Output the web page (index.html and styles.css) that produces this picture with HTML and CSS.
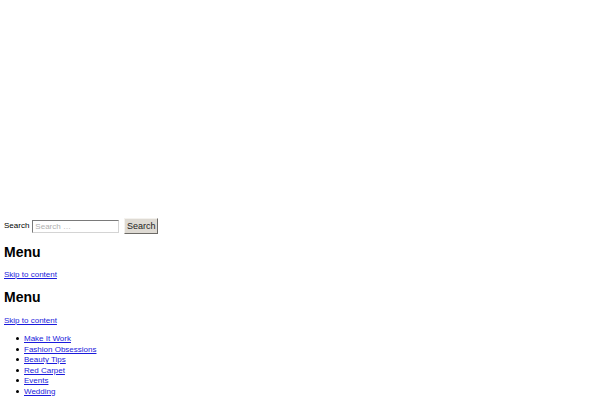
FILE: index.html
```html
<!DOCTYPE html>
<html>
<head>
<meta charset="utf-8">
<link rel="stylesheet" href="styles.css">
</head>
<body>
<div class="hero"></div>
<form class="search">
  <label class="search-label">Search</label>
  <input class="search-input" type="text" placeholder="Search …">
  <button class="search-btn" type="button">Search</button>
</form>
<h2 class="menu-title">Menu</h2>
<a class="skip" href="#">Skip to content</a>
<h2 class="menu-title second">Menu</h2>
<a class="skip" href="#">Skip to content</a>
<ul class="nav">
  <li><a href="#">Make It Work</a></li>
  <li><a href="#">Fashion Obsessions</a></li>
  <li><a href="#">Beauty Tips</a></li>
  <li><a href="#">Red Carpet</a></li>
  <li><a href="#">Events</a></li>
  <li><a href="#">Wedding</a></li>
</ul>
</body>
</html>
```
FILE: styles.css
```css
html, body {
  margin: 0;
  padding: 0;
  background: #fff;
}
body {
  padding: 0 4px;
  font-family: "Liberation Sans", Arial, sans-serif;
  font-size: 8px;
  line-height: 10.5px;
  color: #000;
}
a {
  color: #1a1adb;
}
.hero {
  height: 218px;
}
.search {
  display: flex;
  align-items: center;
  height: 16px;
  margin: 0 0 10px;
}
.search-label {
  margin-right: 3px;
}
.search-input {
  box-sizing: border-box;
  width: 87px;
  height: 13px;
  margin: 0 5px 0 0;
  padding: 0 2px;
  font: 8px "Liberation Sans", Arial, sans-serif;
  border: 1px solid;
  border-color: #7a7a7a #d4d4d4 #d4d4d4 #7a7a7a;
  background: #fff;
}
.search-input::placeholder {
  color: #b0b0b0;
}
.search-btn {
  box-sizing: border-box;
  height: 16px;
  width: 34px;
  padding: 0;
  font: 9px "Liberation Sans", Arial, sans-serif;
  color: #222;
  background: #dedad3;
  border: 1px solid;
  border-color: #f4f2ee #6c6a66 #6c6a66 #f4f2ee;
}
.menu-title {
  margin: 8px 0 10px;
  font-size: 14px;
  line-height: 16px;
  font-weight: bold;
}
.menu-title.second {
  margin-bottom: 11px;
}
.skip {
  display: block;
  width: max-content;
}
.nav {
  margin: 8px 0 0;
  padding-left: 20px;
  list-style: none;
}
.nav li::before {
  content: "";
  display: inline-block;
  width: 3px;
  height: 3px;
  border-radius: 50%;
  background: #000;
  margin: 0 5px 0 -8px;
  vertical-align: 1px;
}
```
